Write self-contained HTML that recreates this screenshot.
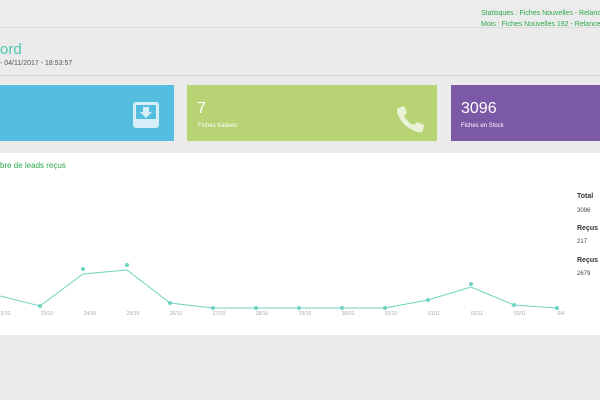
<!DOCTYPE html>
<html><head><meta charset="utf-8"><style>
body{margin:0;width:600px;height:400px;overflow:hidden;background:#ebebeb;font-family:"Liberation Sans",sans-serif;position:relative}
.a{position:absolute;white-space:nowrap}
</style></head><body>
<div class="a" style="left:0;top:0;width:600px;height:27px;background:#ececec;border-bottom:1px solid #dcdcdc"></div>
<div class="a" style="left:481px;top:10px;font-size:7px;color:#2ea84a">Statisques : Fiches Nouvelles - Relance</div>
<div class="a" style="left:481px;top:21px;font-size:7px;color:#2ea84a">Mois : Fiches Nouvelles 192 - Relance</div>
<div class="a" style="left:0;top:41px;font-size:15px;color:#4fc6b0">ord</div>
<div class="a" style="left:0;top:60px;font-size:7px;color:#555">- 04/11/2017 - 18:53:57</div>
<div class="a" style="left:0;top:75px;width:600px;height:1px;background:#d6d6d6"></div>
<div class="a" style="left:0;top:85px;width:174px;height:56px;background:#55bde0"></div>
<svg class="a" style="left:132px;top:101px" width="28" height="28" viewBox="0 0 28 28"><rect x="1" y="1" width="26" height="26" rx="3" fill="#d5eef7"/><rect x="4" y="4" width="20" height="14" fill="#55bde0"/><path d="M11 6h6v5h3l-6 6-6-6h3z" fill="#d5eef7"/></svg>
<div class="a" style="left:187px;top:85px;width:250px;height:56px;background:#b7d374"></div>
<div class="a" style="left:197px;top:100px;font-size:16px;color:#fff">7</div>
<div class="a" style="left:198px;top:123px;font-size:6px;color:#fff">Fiches traitées</div>
<svg class="a" style="left:395px;top:104px" width="30" height="30" viewBox="0 0 30 30"><path d="M3 4 L9 2 L12 9 L9 12 Q13 19 19 21 L22 18 L29 21 L28 27 Q26 29 22 28 Q6 22 2 8 Q2 5 3 4Z" fill="#eaf2d8"/></svg>
<div class="a" style="left:451px;top:85px;width:149px;height:56px;background:#7c59a7"></div>
<div class="a" style="left:461px;top:100px;font-size:16px;color:#fff">3096</div>
<div class="a" style="left:461px;top:123px;font-size:6px;color:#fff">Fiches en Stock</div>
<div class="a" style="left:0;top:153px;width:600px;height:182px;background:#fff"></div>
<div class="a" style="left:0;top:161px;font-size:8px;color:#2ea84a">bre de leads reçus</div>
<svg class="a" style="left:0;top:153px" width="570" height="182">
<polyline fill="none" stroke="#6fd3c0" stroke-width="1" points="0,143 40,153 83,121 127,117 170,150 213,155 256,155 299,155 342,155 385,155 428,147 471,134 514,152 557,155"/>
<g fill="#6fd3c0"><circle cx="40" cy="153" r="2"/><circle cx="83" cy="116" r="2"/><circle cx="127" cy="112" r="2"/><circle cx="170" cy="150" r="2"/><circle cx="213" cy="155" r="2"/><circle cx="256" cy="155" r="2"/><circle cx="299" cy="155" r="2"/><circle cx="342" cy="155" r="2"/><circle cx="385" cy="155" r="2"/><circle cx="428" cy="147" r="2"/><circle cx="471" cy="131" r="2"/><circle cx="514" cy="152" r="2"/><circle cx="557" cy="155" r="2"/></g>
<g font-size="5" fill="#aaa" font-family="Liberation Sans" text-anchor="middle"><text x="4" y="162">22/10</text><text x="47" y="162">23/10</text><text x="90" y="162">24/10</text><text x="133" y="162">25/10</text><text x="176" y="162">26/10</text><text x="219" y="162">27/10</text><text x="262" y="162">28/10</text><text x="305" y="162">29/10</text><text x="348" y="162">30/10</text><text x="391" y="162">31/10</text><text x="434" y="162">01/11</text><text x="477" y="162">02/11</text><text x="520" y="162">03/11</text><text x="561" y="162">04/</text></g>
</svg>
<div class="a" style="left:577px;top:193px;font-size:7px;font-weight:bold;color:#333">Total</div>
<div class="a" style="left:577px;top:208px;font-size:6px;color:#444">3096</div>
<div class="a" style="left:577px;top:225px;font-size:7px;font-weight:bold;color:#333">Reçus</div>
<div class="a" style="left:577px;top:239px;font-size:6px;color:#444">217</div>
<div class="a" style="left:577px;top:257px;font-size:7px;font-weight:bold;color:#333">Reçus</div>
<div class="a" style="left:577px;top:271px;font-size:6px;color:#444">2679</div>
</body></html>
